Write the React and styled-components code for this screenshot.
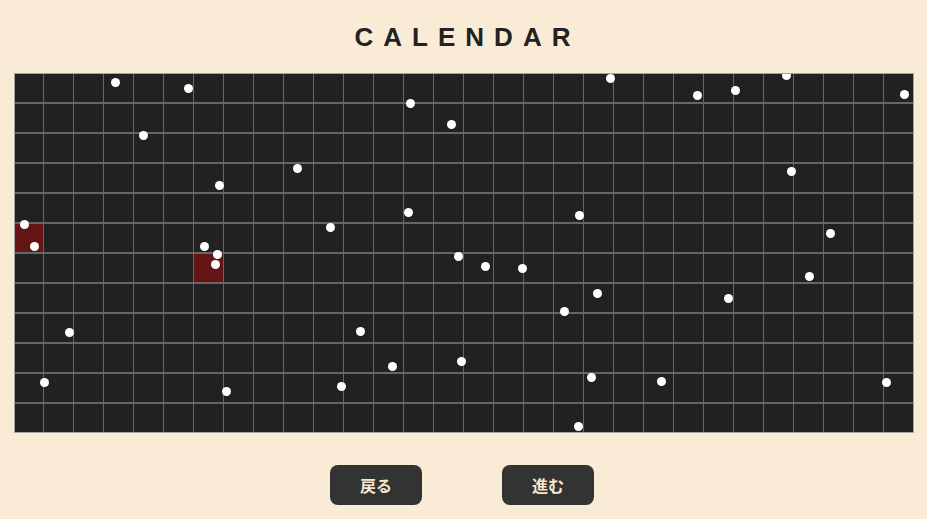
import React from "react";
import styled, { createGlobalStyle } from "styled-components";

const GlobalStyle = createGlobalStyle`
  html, body {
    margin: 0;
    padding: 0;
    background: #faebd7;
  }
  body {
    font-family: "Liberation Sans", "Noto Sans CJK JP", Arial, sans-serif;
  }
`;

const Page = styled.div`
  display: flex;
  flex-direction: column;
  align-items: center;
  padding-top: 22px;
  min-height: 100vh;
  box-sizing: border-box;
  background: #faebd7;
`;

const Title = styled.h1`
  margin: 0;
  font-family: "Liberation Sans", Arial, sans-serif;
  font-size: 26px;
  font-weight: 700;
  line-height: 30px;
  letter-spacing: 10px;
  padding-left: 8px;
  color: #222222;
`;

const Board = styled.div`
  position: relative;
  margin-top: 21px;
  width: 900px;
  height: 360px;
  box-sizing: border-box;
  border: 1px solid #a3a3a3;
  background: #666666;
  display: grid;
  grid-template-columns: repeat(30, 1fr);
  grid-template-rows: repeat(12, 1fr);
  gap: 1.5px;
  overflow: hidden;
`;

const Cell = styled.div`
  background: ${(p) => (p.$marked ? "#641616" : "#212121")};
`;

const Dot = styled.span`
  position: absolute;
  width: 9px;
  height: 9px;
  border-radius: 50%;
  background: #ffffff;
`;

const Controls = styled.div`
  display: flex;
  gap: 80px;
  margin-top: 32px;
  margin-right: 3px;
`;

const NavButton = styled.button`
  height: 40px;
  padding: 0 30px;
  border: none;
  border-radius: 8px;
  background: #333333;
  color: #f6e6d0;
  font-family: "Noto Sans CJK JP", "Liberation Sans", sans-serif;
  font-size: 16px;
  font-weight: 700;
  cursor: pointer;
`;

const DOTS = [
  [115, 82], [188, 88], [410.7, 103.3], [451, 124.7], [143.3, 135],
  [297.3, 168.7], [219.7, 185.3], [408.3, 212], [24, 224.7], [330.3, 227.7],
  [34.3, 246.7], [204, 246.7], [217, 254.7],
  [610.3, 78], [697.3, 95], [735.7, 90], [786.3, 75], [904.7, 94.3],
  [791.7, 171], [579.7, 215], [830, 233.3],
  [215, 264.7], [458.3, 256.7], [69.3, 332.3], [360.3, 331.7], [461.3, 361.3],
  [392, 366.7], [44.3, 382.3], [226, 391], [341, 386.7],
  [485, 266.3], [522, 268.3], [809.3, 276], [597.3, 293], [728.7, 298.7],
  [564.3, 311], [591.3, 377.3], [661.3, 381.7], [886, 382], [578.7, 426],
];

const MARKED = new Set(["5-0", "6-6"]);

export default function App() {
  const cells = [];
  for (let r = 0; r < 12; r++) {
    for (let c = 0; c < 30; c++) {
      cells.push(<Cell key={`${r}-${c}`} $marked={MARKED.has(`${r}-${c}`)} />);
    }
  }
  return (
    <>
      <GlobalStyle />
      <Page>
        <Title>CALENDAR</Title>
        <Board>
          {cells}
          {DOTS.map(([x, y], i) => (
            <Dot key={i} style={{ left: x - 14.5 - 4.5, top: y - 74 - 4.5 }} />
          ))}
        </Board>
        <Controls>
          <NavButton>戻る</NavButton>
          <NavButton>進む</NavButton>
        </Controls>
      </Page>
    </>
  );
}
